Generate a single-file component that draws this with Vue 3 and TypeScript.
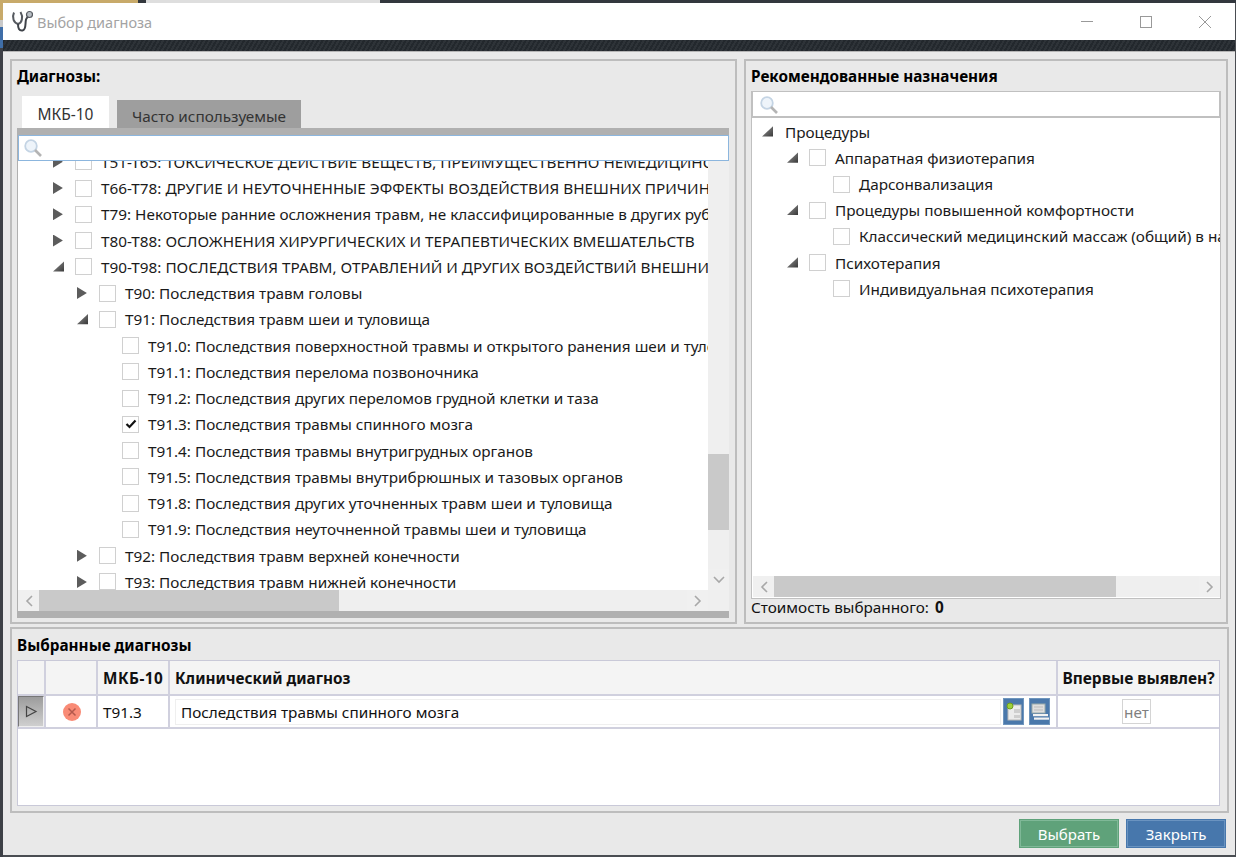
<script setup lang="ts">
interface Row { depth: number; label: string; arrow?: 'open' | 'closed'; checked?: boolean; nocheck?: boolean }

const diagnoses: Row[] = [
  { depth: 0, arrow: 'closed', label: 'T51-T65: ТОКСИЧЕСКОЕ ДЕЙСТВИЕ ВЕЩЕСТВ, ПРЕИМУЩЕСТВЕННО НЕМЕДИЦИНСКОГО НАЗНАЧЕНИЯ' },
  { depth: 0, arrow: 'closed', label: 'T66-T78: ДРУГИЕ И НЕУТОЧНЕННЫЕ ЭФФЕКТЫ ВОЗДЕЙСТВИЯ ВНЕШНИХ ПРИЧИН' },
  { depth: 0, arrow: 'closed', label: 'T79: Некоторые ранние осложнения травм, не классифицированные в других рубриках' },
  { depth: 0, arrow: 'closed', label: 'T80-T88: ОСЛОЖНЕНИЯ ХИРУРГИЧЕСКИХ И ТЕРАПЕВТИЧЕСКИХ ВМЕШАТЕЛЬСТВ' },
  { depth: 0, arrow: 'open', label: 'T90-T98: ПОСЛЕДСТВИЯ ТРАВМ, ОТРАВЛЕНИЙ И ДРУГИХ ВОЗДЕЙСТВИЙ ВНЕШНИХ ПРИЧИН' },
  { depth: 1, arrow: 'closed', label: 'T90: Последствия травм головы' },
  { depth: 1, arrow: 'open', label: 'T91: Последствия травм шеи и туловища' },
  { depth: 2, label: 'T91.0: Последствия поверхностной травмы и открытого ранения шеи и туловища' },
  { depth: 2, label: 'T91.1: Последствия перелома позвоночника' },
  { depth: 2, label: 'T91.2: Последствия других переломов грудной клетки и таза' },
  { depth: 2, label: 'T91.3: Последствия травмы спинного мозга', checked: true },
  { depth: 2, label: 'T91.4: Последствия травмы внутригрудных органов' },
  { depth: 2, label: 'T91.5: Последствия травмы внутрибрюшных и тазовых органов' },
  { depth: 2, label: 'T91.8: Последствия других уточненных травм шеи и туловища' },
  { depth: 2, label: 'T91.9: Последствия неуточненной травмы шеи и туловища' },
  { depth: 1, arrow: 'closed', label: 'T92: Последствия травм верхней конечности' },
  { depth: 1, arrow: 'closed', label: 'T93: Последствия травм нижней конечности' },
]

const recommended: Row[] = [
  { depth: 0, arrow: 'open', label: 'Процедуры', nocheck: true },
  { depth: 1, arrow: 'open', label: 'Аппаратная физиотерапия' },
  { depth: 2, label: 'Дарсонвализация' },
  { depth: 1, arrow: 'open', label: 'Процедуры повышенной комфортности' },
  { depth: 2, label: 'Классический медицинский массаж (общий) в настоящее время' },
  { depth: 1, arrow: 'open', label: 'Психотерапия' },
  { depth: 2, label: 'Индивидуальная психотерапия' },
]
</script>

<template>
  <div class="screen">
    <div class="window">
      <header class="titlebar">
        <svg class="logo" width="22" height="22" viewBox="0 0 22 22" fill="none">
          <path d="M3 2.5 C0.5 8 3 13 7 14 C11 13 12.5 7 9.5 2" stroke="#55595f" stroke-width="2" />
          <path d="M7 14 C7 18 8 21 11.5 20.5 C15.5 20 14 13 15 9.5 C15.4 8 16.5 7.2 17.5 6.5" stroke="#3f4349" stroke-width="2" />
          <circle cx="18.5" cy="4.5" r="3" fill="#b9bfc5" stroke="#55595f" stroke-width="1.2" />
        </svg>
        <span class="title">Выбор диагноза</span>
        <span class="spacer"></span>
        <span class="winbtn"><svg width="12" height="12" viewBox="0 0 12 12"><path d="M0 5.5H12" stroke="#999" /></svg></span>
        <span class="winbtn"><svg width="12" height="12" viewBox="0 0 12 12"><rect x=".5" y=".5" width="11" height="11" fill="none" stroke="#999" /></svg></span>
        <span class="winbtn"><svg width="12" height="12" viewBox="0 0 12 12"><path d="M0 0L12 12M12 0L0 12" stroke="#999" /></svg></span>
      </header>
      <div class="band"></div>

      <main class="content">
        <div class="top">
          <section class="panel left">
            <h2 class="panel-title">Диагнозы:</h2>
            <div class="tabs">
              <span class="tab active">МКБ-10</span>
              <span class="tab">Часто используемые</span>
            </div>
            <div class="tabbody">
              <div class="search focus">
                <svg class="glass" width="20" height="20" viewBox="0 0 20 20" fill="none">
                  <circle cx="8" cy="8" r="5.8" fill="#eef4fa" stroke="#c4d4e4" stroke-width="1.8" />
                  <path d="M12 12L18 18" stroke="#b4b4b4" stroke-width="2.6" />
                </svg>
              </div>
              <div class="treewrap">
                <div class="treeview">
                  <div class="tree scrolled">
                    <div v-for="r in diagnoses" :key="r.label" class="row" :class="'d' + r.depth">
                      <span class="arrow" :class="r.arrow"></span>
                      <span class="check" :class="{ on: r.checked }">
                        <svg v-if="r.checked" width="12" height="10" viewBox="0 0 12 10" fill="none"><path d="M1.5 5L4.5 8L10.5 1.5" stroke="#111" stroke-width="2.2" /></svg>
                      </span>
                      <span class="label">{{ r.label }}</span>
                    </div>
                  </div>
                  <div class="vscroll">
                    <span class="vtrack"><span class="vthumb"></span></span>
                    <span class="sbtn"><svg width="12" height="8" viewBox="0 0 12 8" fill="none"><path d="M1 1L6 6L11 1" stroke="#a8a8a8" stroke-width="1.6" /></svg></span>
                  </div>
                </div>
                <div class="hscroll">
                  <span class="sbtn"><svg width="8" height="12" viewBox="0 0 8 12" fill="none"><path d="M7 1L2 6L7 11" stroke="#a8a8a8" stroke-width="1.6" /></svg></span>
                  <span class="hthumb wide"></span>
                  <span class="htrack"></span>
                  <span class="sbtn"><svg width="8" height="12" viewBox="0 0 8 12" fill="none"><path d="M1 1L6 6L1 11" stroke="#a8a8a8" stroke-width="1.6" /></svg></span>
                  <span class="hcorner"></span>
                </div>
              </div>
            </div>
          </section>

          <section class="panel right">
            <h2 class="panel-title">Рекомендованные назначения</h2>
            <div class="recbox">
              <div class="search plain">
                <svg class="glass" width="20" height="20" viewBox="0 0 20 20" fill="none">
                  <circle cx="8" cy="8" r="5.8" fill="#eef4fa" stroke="#c4d4e4" stroke-width="1.8" />
                  <path d="M12 12L18 18" stroke="#b4b4b4" stroke-width="2.6" />
                </svg>
              </div>
              <div class="tree rec">
                <div v-for="r in recommended" :key="r.label" class="row" :class="'d' + r.depth">
                  <span class="arrow" :class="r.arrow"></span>
                  <span v-if="!r.nocheck" class="check"></span>
                  <span class="label">{{ r.label }}</span>
                </div>
              </div>
              <div class="hscroll rec-h">
                <span class="sbtn"><svg width="8" height="12" viewBox="0 0 8 12" fill="none"><path d="M7 1L2 6L7 11" stroke="#a8a8a8" stroke-width="1.6" /></svg></span>
                <span class="hthumb medium"></span>
                <span class="htrack"></span>
                <span class="sbtn"><svg width="8" height="12" viewBox="0 0 8 12" fill="none"><path d="M1 1L6 6L1 11" stroke="#a8a8a8" stroke-width="1.6" /></svg></span>
              </div>
            </div>
            <p class="cost">Стоимость выбранного: <b>0</b></p>
          </section>
        </div>

        <section class="panel bottom">
          <h2 class="panel-title">Выбранные диагнозы</h2>
          <div class="table">
            <div class="tr head">
              <span class="c c1"></span>
              <span class="c c2"></span>
              <span class="c c3">МКБ-10</span>
              <span class="c c4">Клинический диагноз</span>
              <span class="c c5">Впервые выявлен?</span>
            </div>
            <div class="tr body">
              <span class="c c1">
                <span class="rowmark"><svg width="13" height="13" viewBox="0 0 13 13" fill="none"><path d="M1.5 1.5L11 6.5L1.5 11.5Z" stroke="#444" stroke-width="1.2" /></svg></span>
              </span>
              <span class="c c2">
                <svg width="18" height="18" viewBox="0 0 18 18" fill="none">
                  <circle cx="9" cy="9" r="9" fill="#f98b76" />
                  <path d="M5.5 5.5L12.5 12.5M12.5 5.5L5.5 12.5" stroke="#b4594c" stroke-width="1.5" />
                </svg>
              </span>
              <span class="c c3">T91.3</span>
              <span class="c c4">
                <span class="diag-input">Последствия травмы спинного мозга</span>
                <span class="iconbtn">
                  <svg width="16" height="20" viewBox="0 0 16 20" fill="none">
                    <rect x="2" y="3" width="13" height="15" fill="#ececec" stroke="#b8b8b8" />
                    <rect x="8" y="7" width="6" height="4" fill="#cfcfcf" />
                    <rect x="8" y="13" width="6" height="3" fill="#cfcfcf" />
                    <circle cx="4" cy="4" r="3" fill="#9ed03a" stroke="#6d9c1e" />
                  </svg>
                </span>
                <span class="iconbtn">
                  <svg width="18" height="18" viewBox="0 0 18 18" fill="none">
                    <rect x="1" y="1" width="13" height="9" fill="#dedede" stroke="#9aa" />
                    <path d="M3 4H12M3 7H12" stroke="#bbb" />
                    <rect x="2" y="11" width="15" height="2.2" fill="#f2f2f2" />
                    <rect x="3" y="14.5" width="15" height="2.2" fill="#f2f2f2" />
                  </svg>
                </span>
              </span>
              <span class="c c5"><span class="no">нет</span></span>
            </div>
          </div>
        </section>

        <footer class="actions">
          <button class="btn green" type="button">Выбрать</button>
          <button class="btn blue" type="button">Закрыть</button>
        </footer>
      </main>
    </div>
  </div>
</template>

<style>
html, body { margin: 0; padding: 0; overflow: hidden; }
</style>

<style scoped>
.screen {
  width: 1236px;
  height: 857px;
  box-sizing: border-box;
  padding: 3px 1px 2px 3px;
  overflow: hidden;
  background:
    linear-gradient(90deg, #c8aa6a 0, #c8aa6a 138px, #33373d 138px, #33373d 146px, #dedede 146px, #dedede 380px, #33383e 380px, #33383e 100%) top left / 100% 3px no-repeat,
    linear-gradient(180deg, #c8aa6a 0, #c8aa6a 20px, #c9c9c9 20px, #c9c9c9 27px, #3f6ea8 27px, #3f6ea8 48px, #3d4046 48px, #3d4046 100%) top left / 3px 100% no-repeat,
    #4a4d52;
  font-family: "Noto Sans", "Open Sans", sans-serif;
  font-size: 15.3px;
  color: #111;
}
.window { height: 852px; display: flex; flex-direction: column; background: #e9e9e9; }
.titlebar { height: 37px; flex: none; display: flex; align-items: center; background: #fff; padding-left: 8px; }
.logo { margin-right: 4px; margin-top: -2px; }
.title { color: #a3a3a3; font-size: 14.5px; }
.spacer { flex: 1; }
.winbtn { width: 60px; height: 37px; display: flex; align-items: center; justify-content: center; margin-left: -1px; }
.winbtn:last-child { margin-right: 0; }
.band { height: 12px; flex: none; background: repeating-linear-gradient(120deg, #23282d 0, #23282d 2px, #2e3338 2px, #2e3338 4px); }
.content { flex: 1; padding: 7px 8px 0 7px; display: flex; flex-direction: column; border-top: 1px solid #b5b5b5; min-height: 0; margin-top: -1px; }
.top { display: flex; gap: 7px; height: 565px; flex: none; }
.panel { border: 2px solid #bdbdbd; box-sizing: border-box; background: #e9e9e9; }
.panel-title { margin: 0; font-size: 15.3px; font-weight: 700; line-height: 20px; color: #000; }
.left { width: 727px; padding: 5px 6px 0 5px; }
.right { width: 484px; padding: 5px 5px 0 5px; }
.tabs { display: flex; height: 32px; margin-top: 10px; margin-left: 5px; gap: 8px; align-items: flex-end; position: relative; z-index: 1; }
.tab { background: #9e9e9e; color: #333; height: 28px; padding: 3px 15px 0; box-sizing: border-box; display: flex; align-items: center; font-size: 15.3px; }
.tab.active { background: #fff; height: 32px; padding: 4px 15.5px 0; color: #333; font-size: 15.5px; }
.tabbody { background: #b0b0b0; height: 490px; width: 712px; box-sizing: border-box; padding-top: 7px; }
.search { height: 26px; background: #fff; box-sizing: border-box; position: relative; }
.search.focus { border: 1px solid #8cb6de; margin-left: 1px; }
.search.plain { height: 27px; border: 1px solid #c0c0c0; border-bottom-width: 2px; }
.glass { position: absolute; left: 4px; top: 2px; }
.plain .glass { top: 3px; left: 6px; }
.treewrap { margin-left: 1px; }
.treeview { display: flex; height: 429px; background: #fff; overflow: hidden; }
.tree { flex: 1; min-width: 0; overflow: hidden; }
.scrolled > .row:first-child { margin-top: -12.4px; }
.row { height: 26.27px; display: flex; align-items: center; white-space: nowrap; font-size: 15.3px; position: relative; color: #1a1a1a; }
.row.d0 { padding-left: 35px; }
.row.d1 { padding-left: 59px; }
.row.d2 { padding-left: 104px; }
.arrow { width: 11px; height: 12px; margin-right: 11px; flex: none; }
.d2 .arrow { display: none; }
.arrow.closed { background: #5c5c5c; clip-path: polygon(0 0, 90% 50%, 0 100%); }
.arrow.open { background: linear-gradient(135deg, #999, #333); clip-path: polygon(100% 5%, 100% 90%, 0 90%); }
.check { width: 15px; height: 15px; border: 1px solid #d0d0d0; background: #fff; flex: none; margin-right: 9px; display: inline-flex; align-items: center; justify-content: center; }
.label { flex: none; }
.vscroll { width: 21px; flex: none; background: #efefef; display: flex; flex-direction: column; }
.vtrack { flex: 1; position: relative; display: block; }
.vthumb { position: absolute; left: 0; right: 0; top: 293px; height: 76px; background: #c9c9c9; }
.sbtn { width: 21px; height: 21px; flex: none; display: flex; align-items: center; justify-content: center; background: #f0f0f0; }
.hscroll { display: flex; height: 21px; background: #efefef; }
.hthumb { height: 21px; background: #c9c9c9; flex: none; }
.hthumb.wide { width: 300px; }
.hthumb.medium { width: 342px; }
.htrack { flex: 1; }
.hcorner { width: 21px; flex: none; background: #efefef; }
.recbox { margin-top: 5px; width: 470px; border: 1px solid #c0c0c0; border-top: 0; background: #fff; height: 508px; display: flex; flex-direction: column; box-sizing: border-box; }
.rec { padding-top: 0.6px; }
.rec .row { height: 26.2px; }
.rec .row.d0 { padding-left: 10px; }
.rec .row.d0 .arrow { margin-right: 12px; }
.rec .row.d1 { padding-left: 35px; }
.rec .row.d2 { padding-left: 81px; }
.rec-h { flex: none; margin-bottom: 1px; margin-left: 1px; }
.cost { margin: -1px 0 0; line-height: 19px; font-size: 15.3px; color: #111; }
.cost b { margin-left: 2px; }
.bottom { height: 186px; margin-top: 3px; width: 1219px; padding: 6px 6px 0 5px; flex: none; }
.table { margin-top: 5px; width: 1203px; height: 146px; background: #fff; border: 1px solid #c9c9d8; box-sizing: border-box; }
.tr { display: flex; }
.head { height: 35px; background: #f4f4f4; border-bottom: 2px solid #d0d0de; box-sizing: border-box; font-weight: 700; font-size: 15.3px; color: #111; }
.head .c3 { letter-spacing: .5px; }
.head .c5 { font-size: 15.5px; }
.body { height: 33px; border-bottom: 2px solid #d0d0de; box-sizing: border-box; font-size: 15.3px; }
.c { display: flex; align-items: center; border-right: 2px solid #d0d0de; box-sizing: border-box; flex: none; white-space: nowrap; }
.c1 { width: 28px; }
.c2 { width: 52px; justify-content: center; padding-left: 2px; }
.c3 { width: 72px; padding-left: 5px; }
.c4 { width: 888px; padding-left: 5px; }
.c5 { flex: 1; border-right: 0; justify-content: center; }
.body .c5 { padding-right: 4px; }
.body .c1 { padding: 0; }
.rowmark { width: 26px; height: 31px; display: flex; align-items: center; justify-content: center; background: linear-gradient(#9c9c9c, #cfcfcf); border: 1px solid #777; border-right-color: #eee; border-bottom-color: #eee; box-sizing: border-box; }
.diag-input { flex: 1; height: 26px; display: flex; align-items: center; padding-left: 5px; border: 1px solid #efefef; box-sizing: border-box; margin-right: 2px; }
.iconbtn { width: 21px; height: 27px; background: #4a78ab; display: flex; align-items: center; justify-content: center; margin-left: 5px; flex: none; border: 1px solid #6f95bd; box-sizing: border-box; }
.iconbtn:last-child { margin-right: 6px; }
.iconbtn:nth-child(2) { margin-left: 0; }
.no { width: 29px; height: 25px; border: 1px solid #d4d4d4; box-sizing: border-box; color: #808080; display: flex; align-items: center; justify-content: center; font-size: 15.3px; background: #fff; }
.actions { display: flex; justify-content: flex-end; gap: 7px; margin-top: 6px; padding-right: 1px; }
.btn { width: 100px; height: 29px; border: 1px solid; outline-offset: -2px; color: #fff; font: 15px "Noto Sans", "Open Sans", sans-serif; padding: 0; }
.green { background: #5fa27a; border-color: #5fa27a; outline: 1px solid #7fb897; }
.blue { background: #4777ac; border-color: #4777ac; outline: 1px solid #6a93c0; }
</style>
